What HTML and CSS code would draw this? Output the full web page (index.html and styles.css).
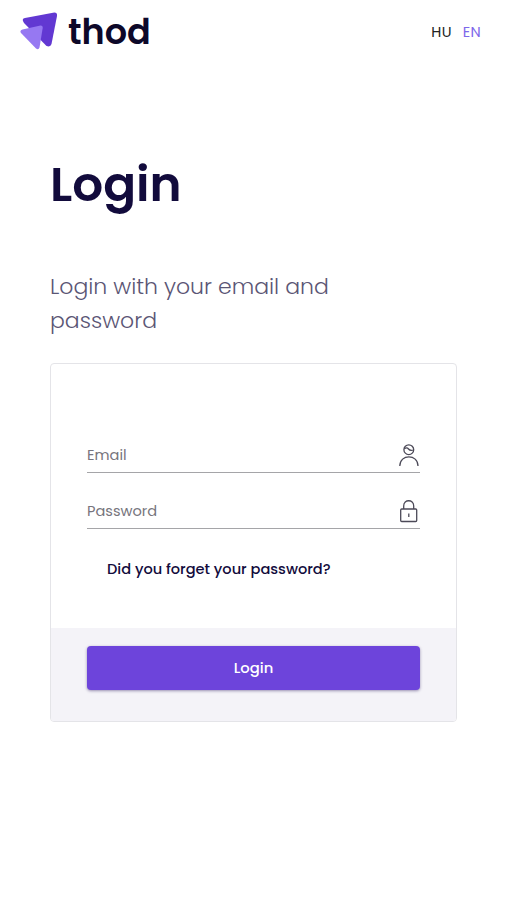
FILE: index.html
```html
<!DOCTYPE html>
<html lang="en">
<head>
  <meta charset="UTF-8" />
  <meta name="viewport" content="width=device-width, initial-scale=1.0" />
  <title>Login | thod</title>
  <link rel="stylesheet" href="styles.css">
</head>
<body>
  <header class="header">
    <a class="logo" href="#">
      <svg class="logo-mark" width="38" height="38" viewBox="0 0 38 38">
        <path d="M5 6L33 .7Q37.500 0 37 4L31.500 32Q30.500 35.500 26.500 34L4 11Q1 6.800 5 6Z" fill="#6238d2" />
        <path d="M2.500 17.500L20.500 13.500Q23 13.300 22.700 16L19.500 35.500Q18.500 38.500 16 36.500L1 21Q-.7 18.500 2.500 17.500Z" fill="#9678f2" />
      </svg>
      <span class="logo-text">thod</span>
    </a>
    <nav class="languages">
      <a href="#">HU</a>
      <a class="active" href="#">EN</a>
    </nav>
  </header>

  <main class="login">
    <h1>Login</h1>
    <p class="subtitle">Login with your email and<br>password</p>
    <form class="card">
      <div class="card-body">
        <div class="form-group">
          <input class="email" type="email" name="email" placeholder="Email" required />
          <svg width="22" height="24" viewBox="0 0 22 24" fill="none" stroke="#4c4a58" stroke-width="1.300">
            <circle cx="10.800" cy="6.700" r="4.900" />
            <path d="M6.300 5.700Q9 4 10.500 6T15.500 7M1.800 23C1.800 10.800 20 10.800 20 23" />
          </svg>
        </div>
        <div class="form-group">
          <input class="password" type="password" name="password" placeholder="Password" required />
          <svg width="22" height="24" viewBox="0 0 22 24" fill="none" stroke="#4c4a58" stroke-width="1.300">
            <rect x="2.700" y="10" width="16" height="12.500" rx="1" />
            <path d="M5.700 10V7C5.700 0 15.700 0 15.700 7V10M10.800 14.500V18" />
          </svg>
        </div>
        <a class="forgot" href="#">Did you forget your password?</a>
      </div>
      <div class="card-footer">
        <button type="submit">Login</button>
      </div>
    </form>
  </main>
</body>
</html>
```

FILE: styles.css
```css
* {
  box-sizing: border-box;
}
body {
  margin: 0;
  font-family: Poppins, Inter, sans-serif;
  color: #120b3c;
  background: #fff;
}
a {
  color: inherit;
  text-decoration: none;
}
.header {
  display: flex;
  align-items: center;
  justify-content: space-between;
  height: 62px;
  padding: 0 25px 0 20px;
}
.logo {
  display: flex;
  align-items: center;
  gap: 10px;
}
.logo-text {
  padding-top: 1px;
  font-size: 35px;
  line-height: 38px;
  font-weight: 600;
  color: #0d0829;
}
.languages {
  display: flex;
  gap: 11px;
  padding-top: 2px;
  font-size: 14.5px;
  letter-spacing: 0.3px;
  color: #222;
}
.languages .active {
  color: #7d68ea;
}
.login {
  padding: 92px 49px 0 50px;
}
h1 {
  margin: 0;
  font-size: 48.5px;
  line-height: 60px;
  font-weight: 600;
}
.subtitle {
  margin: 56px 0 25px;
  font-size: 22px;
  line-height: 34px;
  font-weight: 300;
  color: #5b5675;
}
.card {
  border: 1px solid #e4e4e8;
  border-radius: 4px;
  overflow: hidden;
}
.card-body {
  height: 264px;
  padding: 71px 36px 0;
}
.form-group {
  display: flex;
  align-items: center;
  height: 38px;
  margin-bottom: 18px;
  padding-top: 3px;
  border-bottom: 1px solid #a5a5a8;
}
.form-group:nth-child(2) {
  margin-bottom: 0;
}
input {
  flex: 1;
  min-width: 0;
  padding: 0;
  border: none;
  outline: none;
  background: none;
  font: inherit;
  font-size: 14.6px;
}
input::placeholder {
  color: #77757d;
}
.forgot {
  display: block;
  margin: 30px 0 0 20px;
  font-size: 14.6px;
  line-height: 20px;
  font-weight: 500;
}
.card-footer {
  height: 93px;
  padding: 18px 36px 0;
  background: #f4f3f8;
}
button {
  display: block;
  width: 100%;
  height: 44px;
  border: none;
  border-radius: 4px;
  background: #6d44db;
  box-shadow: 0 1px 3px rgba(40, 20, 90, 0.45);
  color: #fff;
  font: inherit;
  font-size: 14.8px;
  font-weight: 500;
  cursor: pointer;
}
```
